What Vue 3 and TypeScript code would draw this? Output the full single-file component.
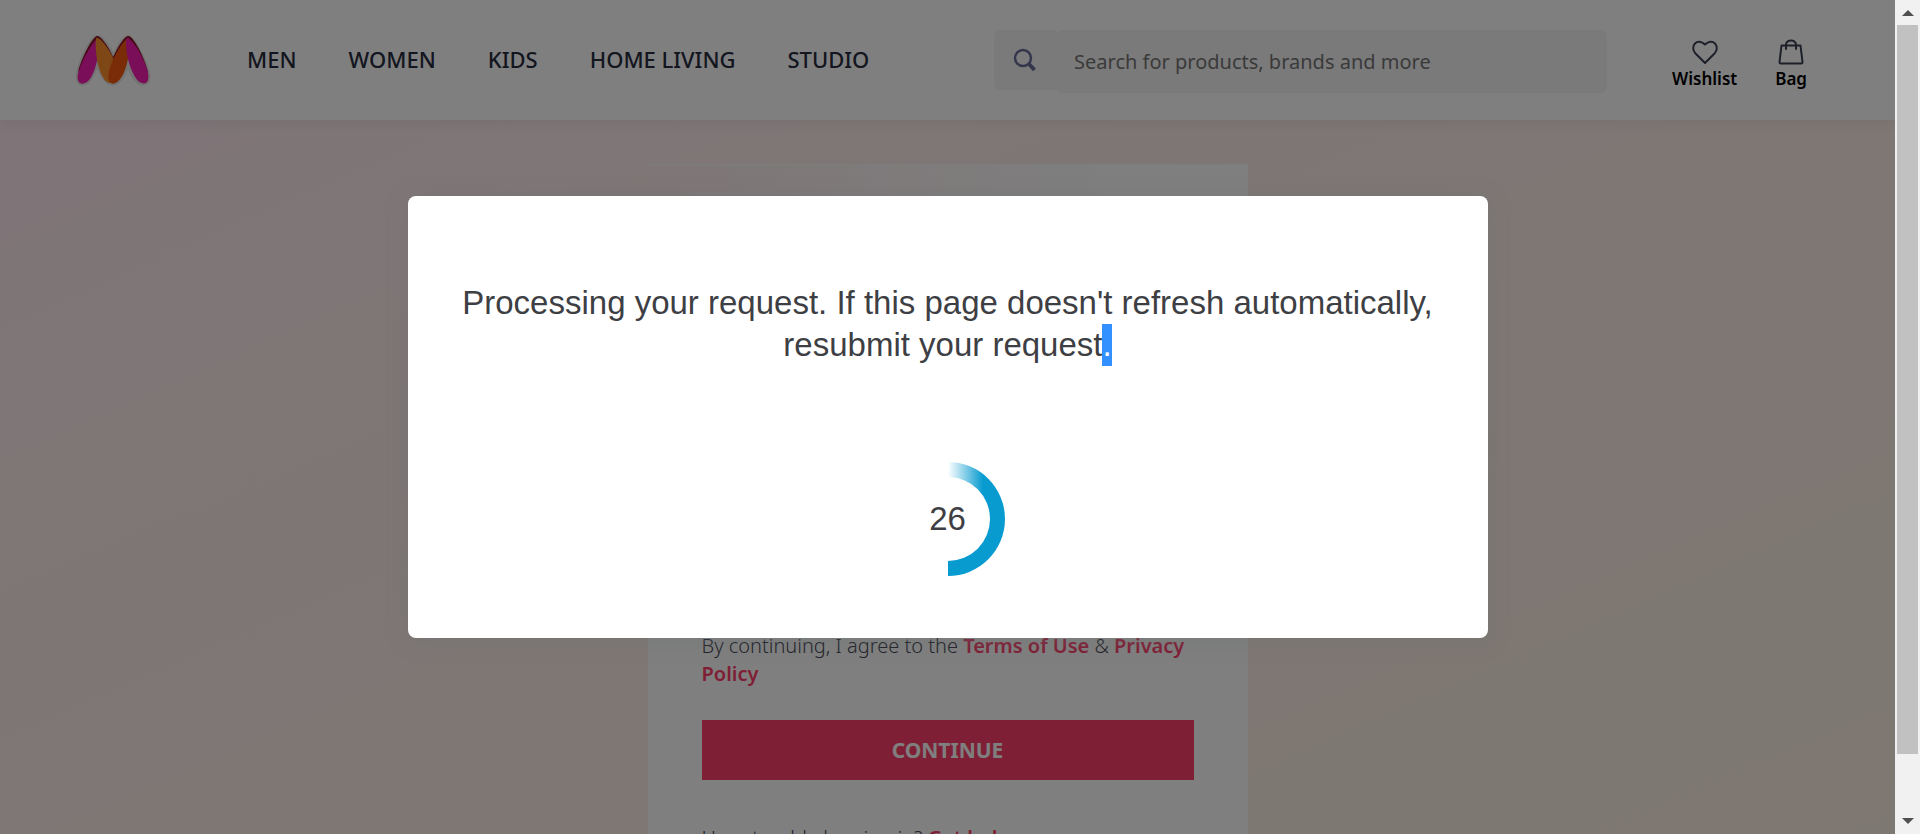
<script setup lang="ts">
import { ref } from 'vue'

const links: string[] = ['MEN', 'WOMEN', 'KIDS', 'HOME LIVING', 'STUDIO']
const query = ref<string>('')
const seconds = ref<number>(26)
</script>

<template>
  <div class="screen">
    <div class="page">
      <header class="header">
        <a class="logo" href="#" aria-label="Home">
          <svg viewBox="45 42 228 162" width="76" height="54" aria-hidden="true">
            <path d="M54 160C62 120 96 50 112 50S152 92 160 112C170 88 192 50 205 50S254 118 264 160C268 180 262 191 250 191C228 191 212 158 204 128C196 158 180 191 158 191C136 191 122 160 111 128C102 158 88 191 68 191C56 191 51 180 54 160Z" fill="none" stroke="#e6e6e6" stroke-width="12" />
            <path d="M54 156C64 116 98 48 112 48C124 48 148 84 160 112L150 130L112 70L80 130Z" fill="#8c1024" />
            <path d="M148 140C160 104 190 48 205 48C220 48 254 112 264 156L236 130L205 70L170 140Z" fill="#8c1024" />
            <path d="M110 58C90 76 62 130 54 162C50 180 56 191 68 191C88 191 104 158 112 118Z" fill="#f41cb0" />
            <path d="M108 56C104 90 112 144 130 174C138 187 148 191 156 188L160 114C146 86 124 56 113 54C110 53 108 54 108 56Z" fill="#fd8f2c" />
            <path d="M205 54C186 62 146 132 145 168C145 184 152 191 160 191C182 188 200 148 205 108Z" fill="#f4560f" />
            <path d="M199 56C194 96 210 150 230 178C240 190 250 192 258 189C268 182 266 164 262 150C250 112 222 64 205 55C202 53 200 54 199 56Z" fill="#f41cb0" />
          </svg>
        </a>
        <nav class="nav">
          <a v-for="link in links" :key="link" href="#">{{ link }}</a>
        </nav>
        <form class="search" @submit.prevent>
          <button class="search-button" type="submit" aria-label="Search">
            <svg viewBox="0 0 24 24" width="24" height="24" fill="none" stroke="#696e99" stroke-width="2.500" aria-hidden="true">
              <circle cx="10" cy="10" r="8" />
              <path d="M15.500 15.500L21.500 22" stroke-width="4" />
            </svg>
          </button>
          <input v-model="query" type="text" aria-label="Search" placeholder="Search for products, brands and more" />
        </form>
        <div class="actions">
          <a href="#">
            <svg viewBox="0 0 26 26" width="26" height="26" fill="none" stroke="#3a3e52" stroke-width="2" stroke-linejoin="round" aria-hidden="true">
              <path d="M13 24L3.500 14.500C.5 11.500.5 7 3 4.500S9.500 2 13 5.500C16.500 2 20.500 2 23 4.500S25.500 11.500 22.500 14.500Z" />
            </svg>
            <span>Wishlist</span>
          </a>
          <a href="#">
            <svg viewBox="0 0 26 26" width="26" height="26" fill="none" stroke="#3a3e52" stroke-width="2" stroke-linejoin="round" stroke-linecap="round" aria-hidden="true">
              <path d="M3.500 6.500H22.500L24.500 23Q24.500 24.500 23 24.500H3Q1.500 24.500 1.500 23Z" />
              <path d="M8 10V6C8 0 18 0 18 6V10" />
            </svg>
            <span>Bag</span>
          </a>
        </div>
      </header>

      <main class="main">
        <section class="card">
          <div class="banner"></div>
          <div class="body">
            <p>
              By continuing, I agree to the <a href="#">Terms of Use</a> &amp;
              <a href="#">Privacy Policy</a>
            </p>
            <button class="continue" type="button">CONTINUE</button>
            <p>Have trouble logging in? <a href="#">Get help</a></p>
          </div>
        </section>
      </main>

      <div class="overlay">
        <div class="modal" role="dialog" aria-labelledby="message">
          <p id="message" class="message">
            Processing your request. If this page doesn't refresh automatically, resubmit your request<span class="selected">.</span>
          </p>
          <div class="spinner" role="status">
            <svg viewBox="0 0 114 114" width="114" height="114" aria-hidden="true">
              <defs>
                <linearGradient id="fade" gradientUnits="userSpaceOnUse" x1="57" y1="0" x2="92" y2="0">
                  <stop offset="0" stop-color="#089bd0" stop-opacity="0" />
                  <stop offset="1" stop-color="#089bd0" />
                </linearGradient>
              </defs>
              <path d="M57 0A57 57 0 0 1 114 57H99A42 42 0 0 0 57 15Z" fill="url(#fade)" />
              <path d="M114 57A57 57 0 0 1 57 114V99A42 42 0 0 0 99 57Z" fill="#089bd0" />
            </svg>
            <span class="count">{{ seconds }}</span>
          </div>
        </div>
      </div>
    </div>

    <div class="scrollbar" aria-hidden="true">
      <svg viewBox="0 0 12 6" width="12" height="6"><path d="M0 6L6 0L12 6Z" fill="#505050" /></svg>
      <div class="track"><div class="thumb"></div></div>
      <svg viewBox="0 0 12 6" width="12" height="6"><path d="M0 0L6 6L12 0Z" fill="#505050" /></svg>
    </div>
  </div>
</template>

<style>
body {
  margin: 0;
}
</style>

<style scoped>
.screen {
  display: flex;
  height: 100vh;
  overflow: hidden;
  font-family: "Noto Sans", "Open Sans", sans-serif;
}
.page {
  position: relative;
  flex: 1;
  display: flex;
  flex-direction: column;
  min-width: 0;
  overflow: hidden;
  background: linear-gradient(to bottom right, #ffeaf2, #fdeeea 50%, #fbf1e2);
}
a {
  color: inherit;
  text-decoration: none;
}
.header {
  position: relative;
  display: flex;
  align-items: flex-start;
  flex: none;
  box-sizing: border-box;
  height: 120px;
  padding: 30px 88px 0 75px;
  background: #fff;
  box-shadow: 0 4px 12px rgba(0, 0, 0, 0.06);
}
.logo {
  display: flex;
  margin-top: 4px;
}
.nav {
  display: flex;
  gap: 52px;
  margin-left: 96px;
  font-size: 22px;
  font-weight: 500;
  line-height: 58px;
  white-space: nowrap;
  color: #282c3f;
}
.search {
  flex: 1;
  display: flex;
  align-items: flex-start;
  max-width: 613px;
  margin-left: auto;
}
.search-button {
  width: 62px;
  height: 60px;
  padding: 0 0 0 19px;
  border: 0;
  border-radius: 6px 0 0 6px;
  background: #f5f5f6;
  text-align: left;
}
.search-button svg {
  display: block;
}
.search input {
  flex: 1;
  min-width: 0;
  box-sizing: border-box;
  height: 63px;
  padding: 0 18px;
  border: 0;
  border-radius: 6px;
  background: #f5f5f6;
  font-family: inherit;
  font-size: 20px;
  font-weight: 400;
  color: #282c3f;
}
.search input::placeholder {
  color: #757575;
  opacity: 1;
}
.actions {
  display: flex;
  gap: 38px;
  margin-top: 9px;
  margin-left: 65px;
  font-size: 17px;
  font-weight: 600;
  line-height: 28px;
  color: #000;
}
.actions a {
  display: flex;
  flex-direction: column;
  align-items: center;
}
.main {
  flex: 1;
  display: flex;
  justify-content: center;
  align-items: flex-start;
  padding-top: 44px;
}
.card {
  width: 600px;
  background: #fff;
}
.banner {
  height: 300px;
  border-top: 1px solid #f8fdf8;
  box-sizing: border-box;
  background: linear-gradient(to right, #fdecee, #fff 80%);
}
.body {
  padding: 168px 54px 54px;
  font-size: 20px;
  font-weight: 300;
  line-height: 28px;
  color: #424553;
}
.body p {
  margin: 0;
}
.body a {
  font-weight: 600;
  color: #ff3f6c;
}
.continue {
  display: block;
  width: 100%;
  height: 60px;
  margin: 32px 0 44px;
  border: 0;
  background: #ff3f6c;
  font-family: inherit;
  font-size: 21px;
  font-weight: 700;
  color: #fff;
}
.overlay {
  position: absolute;
  inset: 0;
  display: grid;
  place-items: center;
  background: rgba(0, 0, 0, 0.5);
}
.modal {
  box-sizing: border-box;
  width: 1080px;
  max-width: 90%;
  padding: 86px 48px 62px;
  border-radius: 8px;
  background: #fff;
  box-shadow: 0 2px 20px rgba(110, 115, 115, 0.4);
  font-family: "Liberation Sans", Arial, sans-serif;
  font-size: 33px;
  line-height: 42px;
  text-align: center;
  color: #3e3f44;
}
.message {
  margin: 0 0 96px;
}
.selected {
  background: #3390ff;
  color: #fff;
  display: inline-block;
}
.spinner {
  display: grid;
  place-items: center;
}
.spinner > * {
  grid-area: 1 / 1;
}
.scrollbar {
  flex: none;
  display: flex;
  flex-direction: column;
  align-items: center;
  gap: 9px;
  box-sizing: border-box;
  width: 25px;
  padding: 10px 2px;
  background: #f1f1f1;
}
.track {
  flex: 1;
  width: 100%;
}
.thumb {
  height: 93%;
  background: #c1c1c1;
}
</style>
